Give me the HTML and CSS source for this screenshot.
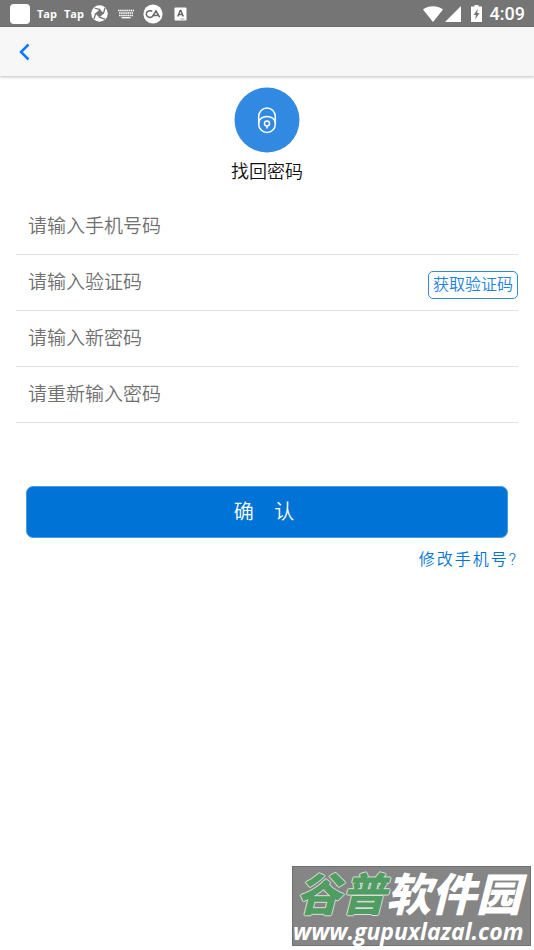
FILE: index.html
```html
<!DOCTYPE html>
<html lang="zh-CN">
<head>
<meta charset="utf-8">
<meta name="viewport" content="width=device-width, initial-scale=1">
<title>找回密码</title>
<link rel="stylesheet" href="styles.css">
</head>
<body>
<div class="status">
  <div class="notices">
    <span class="blank"></span>
    <span class="tap">Tap</span>
    <span class="tap">Tap</span>
    <svg class="shutter" width="17" height="17" viewBox="0 0 17 17"><circle cx="8.500" cy="8.500" r="8.300" fill="#fff"/><path d="m8.800 4.200 4 4.400-4.400 4-4.200-4.200z" fill="#757575"/><path d="M9.300 4.700 3.500 3M12.300 8.800 14 3M8 12.200l6 2M4.800 8.200 3 14" stroke="#757575" stroke-width="1.300" fill="none"/></svg>
    <svg class="keys" width="16" height="10" viewBox="0 0 16 10" stroke="#fff" fill="none"><path d="M0 1.500h16M1 4h14M1 6.500h14" stroke-width="1.500" stroke-dasharray="1.600 .5"/><path d="M3.500 8.700h9" stroke-width="1.300"/></svg>
    <svg class="round" width="20" height="20" viewBox="0 0 20 20"><circle cx="10" cy="10" r="9.600" fill="#fff"/><path d="M9.300 7.400C6.800 5.800 3.300 7 3.300 10s3.400 4.300 6 2.600L13 7l3.700 6.300M10.200 11.500h4.300" fill="none" stroke="#666" stroke-width="1.500"/></svg>
    <svg width="13" height="14" viewBox="0 0 13 14"><rect x=".5" y=".5" width="12" height="13" rx="1" fill="#fff"/><path d="m3.700 9.500 2.500-6h.6l2.500 6M4.500 7.600h4" fill="none" stroke="#666" stroke-width="1.500"/><path d="M6.500 12h4" stroke="#888" stroke-width=".8"/></svg>
  </div>
  <div class="system">
    <svg width="20" height="16" viewBox="0 0 20 16"><path d="M0 3.500C6-.8 14-.8 20 3.500L10 16z" fill="#fff"/></svg>
    <svg width="16" height="16" viewBox="0 0 16 16"><path d="M16 0v16H0z" fill="#fff"/></svg>
    <svg class="battery" width="11" height="17" viewBox="0 0 11 17"><path d="M3.500 0h4v1.500H11V17H0V1.500h3.500z" fill="#fff"/><path d="M6.800 3.800 2.700 10h2.200l-.6 4.500L8.500 8H6.200z" fill="#757575"/></svg>
    <time class="clock">4:09</time>
  </div>
</div>
<header class="navbar">
  <button class="back" type="button" aria-label="返回"><svg width="12" height="18" viewBox="0 0 12 18"><path d="M10.500 1.500 3 9l7.500 7.500" fill="none" stroke="#0a7cfb" stroke-width="2.500"/></svg></button>
</header>
<main>
  <div class="hero">
    <svg class="emblem" width="66" height="66" viewBox="0 0 66 66"><circle cx="33" cy="33" r="32.500" fill="#3189e1"/><g fill="none" stroke="#fff" stroke-width="1.500"><rect x="24.700" y="21" width="16.600" height="24.500" rx="8.300"/><path d="M24.700 36.500c0-9.500 16.600-9.500 16.600 0"/><circle cx="33" cy="36.500" r="2.500"/><path d="M33 39v2.500"/></g></svg>
    <h1>找回密码</h1>
  </div>
  <form>
    <div class="row"><input type="tel" placeholder="请输入手机号码" aria-label="请输入手机号码"></div>
    <div class="row"><input type="text" placeholder="请输入验证码" aria-label="请输入验证码"><button class="code" type="button">获取验证码</button></div>
    <div class="row"><input type="password" placeholder="请输入新密码" aria-label="请输入新密码"></div>
    <div class="row"><input type="password" placeholder="请重新输入密码" aria-label="请重新输入密码"></div>
    <button class="submit" type="submit">确&emsp;认</button>
    <a class="change" href="#">修改手机号?</a>
  </form>
</main>
<aside class="mark">
  <div class="brand"><span class="green">谷普</span>软件园</div>
  <div class="site">www.gupuxlazal.com</div>
</aside>
</body>
</html>
```
FILE: styles.css
```css
* { box-sizing: border-box; }
body {
  margin: 0;
  min-height: 100vh;
  display: flex;
  flex-direction: column;
  background: #fff;
  color: #111;
  font-family: Roboto, "Noto Sans CJK SC", sans-serif;
  font-weight: 350;
}
button, input { font-family: inherit; font-weight: inherit; }
svg { display: block; flex: none; }
main { flex: 1; }

.status {
  height: 27px;
  padding: 0 9px 0 10px;
  display: flex;
  align-items: center;
  justify-content: space-between;
  background: #757575;
  color: #fff;
}
.notices, .system { display: flex; align-items: center; }
.notices { gap: 7px; }
.blank { width: 20px; height: 20px; border-radius: 4px; background: #fff; }
.tap { font: 700 11px/16px "Open Sans", sans-serif; }
.shutter { margin-right: 3px; }
.round { margin: 0 4px 0 2px; }
.system { gap: 2px; }
.battery { margin: 0 6px 0 8px; }
.clock { font-size: 18px; line-height: 27px; font-weight: 500; }

.navbar {
  height: 49px;
  display: flex;
  align-items: center;
  background: #f7f7f7;
  box-shadow: 0 1px 3px rgba(0, 0, 0, .25);
}
.back { padding: 12px 18px; border: 0; background: none; }

.hero { padding-top: 11px; display: flex; flex-direction: column; align-items: center; }
h1 { margin: 6px 0 0; font-size: 18px; line-height: 26px; font-weight: inherit; }

form { padding: 14px 16px 0; display: flex; flex-direction: column; }
.row {
  height: 56px;
  padding-left: 12px;
  display: flex;
  align-items: center;
  border-bottom: 1px solid #e0e0e0;
}
.row input {
  flex: 1;
  min-width: 0;
  height: 55px;
  padding: 0;
  border: 0;
  outline: 0;
  background: none;
  font-size: 19px;
}
.row input::placeholder { color: #707070; }
.code {
  height: 28px;
  margin-top: 4px;
  padding: 0 4px;
  border: 1px solid #3189e1;
  border-radius: 5px;
  background: #fff;
  color: #2381df;
  font-size: 16px;
  line-height: 24px;
}
.submit {
  height: 52px;
  margin: 63px 10px 0;
  padding: 0 6px 4px 0;
  border: 1px solid #4a9ce2;
  border-radius: 7px;
  background: #0074d6;
  color: #fff;
  font-size: 20px;
}
.change {
  align-self: flex-end;
  margin-top: 10px;
  color: #0074d6;
  font-size: 16px;
  line-height: 24px;
  letter-spacing: 2px;
  text-decoration: none;
}

.mark {
  align-self: flex-end;
  width: 239px;
  margin: 0 3px 4px 0;
  border: 1px solid #707070;
  background: #858585;
  color: #fff;
  white-space: nowrap;
}
.brand {
  padding-left: 3px;
  font: italic 900 45px/50px "Noto Sans CJK SC", sans-serif;
}
.green { color: #4f9d60; text-shadow: 1px 0 #ddd, -1px 0 #ddd, 0 1px #ddd, 0 -1px #ddd; }
.site { font: italic 700 23px/28px "Open Sans", sans-serif; }
```
